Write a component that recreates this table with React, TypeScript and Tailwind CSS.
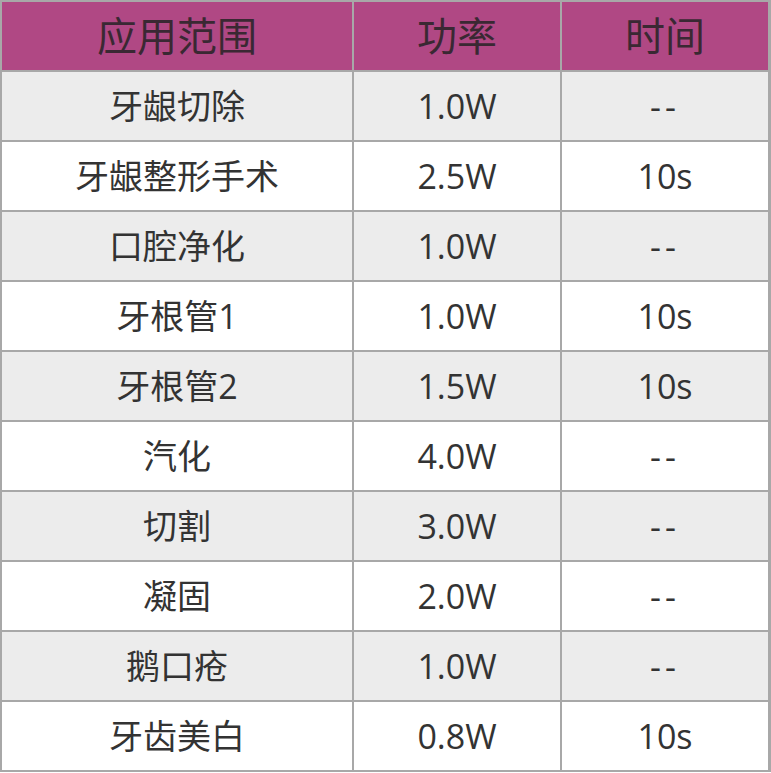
import React from "react";

const rows: [string, string, string][] = [
  ["牙龈切除", "1.0W", "--"],
  ["牙龈整形手术", "2.5W", "10s"],
  ["口腔净化", "1.0W", "--"],
  ["牙根管1", "1.0W", "10s"],
  ["牙根管2", "1.5W", "10s"],
  ["汽化", "4.0W", "--"],
  ["切割", "3.0W", "--"],
  ["凝固", "2.0W", "--"],
  ["鹅口疮", "1.0W", "--"],
  ["牙齿美白", "0.8W", "10s"],
];

export default function App() {
  return (
    <div className="w-[771px] h-[773px] bg-white font-['Open_Sans','Noto_Sans_CJK_SC',sans-serif]">
      <div className="grid grid-cols-[350px_206px_206px] auto-rows-[68px] gap-[2px] bg-[#a8a8a8] pt-[2px] pl-[2px] pr-[3px] pb-[2px] w-[771px]">
        {["应用范围", "功率", "时间"].map((h) => (
          <div
            key={h}
            className="bg-[#b04884] flex items-center justify-center text-[40px] leading-none text-[#3a2833]"
          >
            {h}
          </div>
        ))}
        {rows.map((r, i) => (
          <React.Fragment key={i}>
            {r.map((c, j) => (
              <div
                key={j}
                className={`${i % 2 === 0 ? "bg-[#ececec]" : "bg-white"} flex items-center justify-center text-[34px] leading-none text-[#333333] ${c === "--" ? "tracking-[4px]" : ""}`}
              >
                {c}
              </div>
            ))}
          </React.Fragment>
        ))}
      </div>
    </div>
  );
}
